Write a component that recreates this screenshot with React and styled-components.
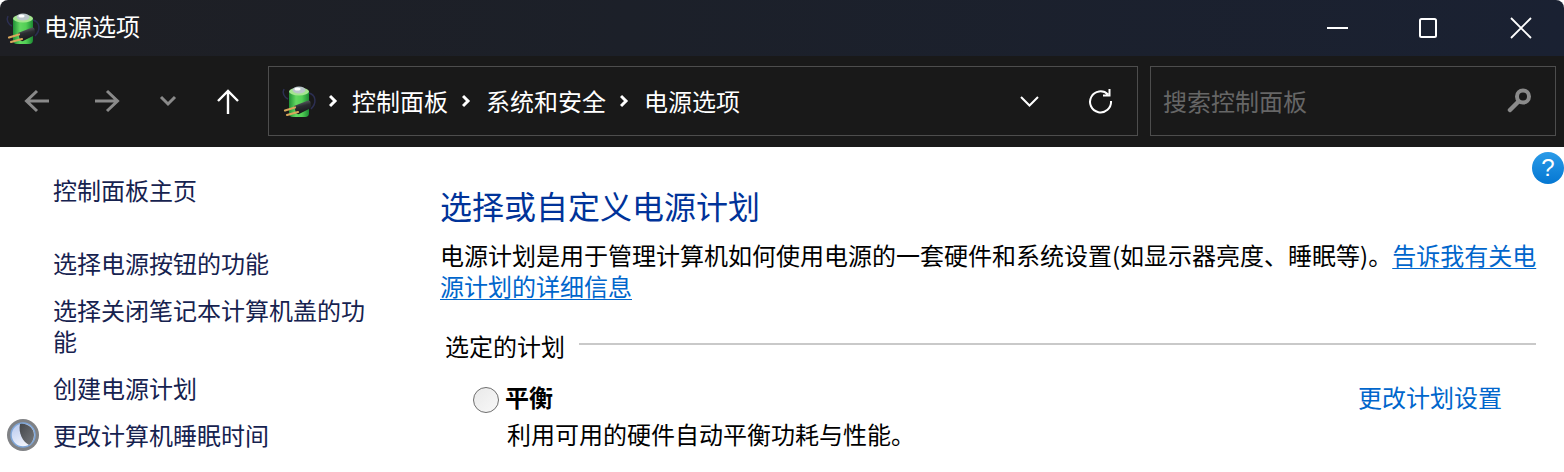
import React, { useId } from "react";
import styled, { createGlobalStyle } from "styled-components";

const FONT = `"Noto Sans CJK SC", "Noto Sans", sans-serif`;

const GlobalStyle = createGlobalStyle`
  html, body {
    margin: 0;
    background: #fff;
    overflow: hidden;
  }
  * { box-sizing: border-box; }
`;

const Page = styled.div`
  position: relative;
  width: 1564px;
  height: 472px;
  overflow: hidden;
  font-family: ${FONT};
  font-size: 24px;
  letter-spacing: 0;
`;

const TitleBar = styled.div`
  display: flex;
  align-items: center;
  height: 56px;
  padding-left: 7px;
  background: linear-gradient(90deg, #1e1f24 0%, #1c2029 40%, #1a2132 100%);
  border-radius: 8px 8px 0 0;
  color: #fff;
`;

const TitleIcon = styled.span`
  display: flex;
  margin-top: -1px;
`;

const TitleText = styled.span`
  margin-left: 5px;
  padding-bottom: 4px;
  flex: 1;
  line-height: 32px;
`;

const WindowButton = styled.div`
  display: flex;
  align-items: center;
  justify-content: center;
  width: ${(p) => p.$w}px;
  height: 56px;
`;

const Toolbar = styled.div`
  display: flex;
  align-items: center;
  height: 91px;
  padding: 0 8px 1px 0;
  background: #191919;
`;

const NavGroup = styled.div`
  display: flex;
  align-items: center;
  width: 268px;
  height: 70px;
`;

const NavButton = styled.div`
  display: flex;
  align-items: center;
  justify-content: center;
  width: ${(p) => p.$w}px;
  height: 70px;
`;

const AddressBar = styled.div`
  display: flex;
  align-items: center;
  width: 870px;
  height: 70px;
  padding-left: 14px;
  border: 1px solid #4d4d4d;
  color: #fff;
`;

const Crumb = styled.span`
  line-height: 32px;
`;

const CrumbSep = styled.span`
  display: flex;
  align-items: center;
  justify-content: center;
  width: ${(p) => p.$w}px;
`;

const AddressTools = styled.div`
  display: flex;
  align-items: center;
  margin-left: auto;
`;

const ToolButton = styled.div`
  display: flex;
  align-items: center;
  justify-content: center;
  width: ${(p) => p.$w}px;
  height: 68px;
`;

const SearchBox = styled.div`
  display: flex;
  align-items: center;
  justify-content: space-between;
  width: 406px;
  height: 70px;
  margin-left: 12px;
  padding: 0 22px 2px 12px;
  border: 1px solid #4d4d4d;
  color: #666;
`;

const Body = styled.div`
  display: flex;
  height: 325px;
  background: #fff;
`;

const Sidebar = styled.nav`
  display: flex;
  flex-direction: column;
  width: 440px;
  flex: none;
  padding-top: 27px;
`;

const SideItem = styled.a`
  display: flex;
  align-items: flex-start;
  width: 375px;
  margin-top: ${(p) => p.$top || 0}px;
  padding-left: ${(p) => (p.$icon ? 7 : 53)}px;
  color: #16224f;
  line-height: 31px;
`;

const SideIcon = styled.span`
  display: flex;
  width: 46px;
  height: 32px;
  flex: none;
`;

const Main = styled.main`
  display: flex;
  flex-direction: column;
  width: 1099px;
  flex: none;
  padding-top: 35px;
`;

const Heading = styled.h1`
  margin: 0;
  color: #003399;
  font-size: 32px;
  font-weight: 400;
  line-height: 46px;
`;

const Description = styled.p`
  margin: 11px 0 0;
  color: #000;
  line-height: 31px;
`;

const InlineLink = styled.a`
  color: #0066cc;
  text-decoration: underline;
  text-underline-offset: 3px;
  text-decoration-thickness: 1px;
`;

const SectionRow = styled.div`
  display: flex;
  align-items: center;
  margin: 29px 3px 0 0;
  padding-left: 5px;
  color: #000;
  line-height: 32px;
`;

const SectionRule = styled.div`
  flex: 1;
  height: 2px;
  margin: 0 0 4px 14px;
  background: #c9c9c9;
`;

const PlanRow = styled.div`
  display: flex;
  align-items: center;
  height: 32px;
  margin-top: 18px;
  padding-left: 33px;
`;

const Radio = styled.span`
  display: block;
  width: 26px;
  height: 26px;
  margin-top: 8px;
  border: 1.5px solid #6e6e6e;
  border-radius: 50%;
  background: linear-gradient(135deg, #e9e9e9, #f8f8f8);
`;

const PlanName = styled.span`
  margin-left: 6px;
  color: #000;
  font-weight: 700;
`;

const PlanLink = styled.a`
  margin-left: auto;
  margin-right: 37px;
  color: #0066cc;
`;

const PlanDescription = styled.div`
  margin-top: 6px;
  padding-left: 67px;
  color: #000;
  line-height: 32px;
`;

const HelpBadge = styled.div`
  position: absolute;
  top: 152px;
  left: 1532px;
  display: flex;
  align-items: center;
  justify-content: center;
  width: 32px;
  height: 32px;
  border-radius: 50%;
  background: linear-gradient(180deg, #2a9be8 0%, #0577d2 100%);
  color: #fff;
  font-family: "Liberation Sans", sans-serif;
  font-size: 24px;
`;

const BatteryIcon = () => {
  const body = useId();
  const plug = useId();
  return (
    <svg width="32" height="32" viewBox="0 0 32 32" overflow="visible">
      <defs>
        <linearGradient id={body} x1="0" x2="1" y1="0" y2="0">
          <stop offset="0" stopColor="#1f8f35" />
          <stop offset="0.35" stopColor="#63d861" />
          <stop offset="0.65" stopColor="#52cf55" />
          <stop offset="1" stopColor="#1c8a33" />
        </linearGradient>
        <linearGradient id={plug} x1="0" x2="0.300" y1="0" y2="1">
          <stop offset="0" stopColor="#7b8084" />
          <stop offset="0.500" stopColor="#2b2d31" />
          <stop offset="1" stopColor="#17181b" />
        </linearGradient>
      </defs>
      <path d="M1 4C-1 8 1 12 5 14" fill="none" stroke="#2c2f52" strokeWidth="1.500" />
      <path d="M26 8C33 10 34 18 28 24" fill="none" stroke="#2c2f52" strokeWidth="1.500" />
      <path d="M6 6H26V28Q26 32 22 32H10Q6 32 6 28Z" fill={`url(#${body})`} />
      <ellipse cx="16" cy="6.500" rx="10" ry="4" fill="#a4e58f" />
      <ellipse cx="16" cy="5" rx="6.500" ry="3.500" fill="#b9c5c9" />
      <ellipse cx="14.500" cy="4" rx="3" ry="1.500" fill="#fff" />
      <path d="M11 21L25 15.500Q27 15 27.500 17L28 21Q28 23 26 24L16 29Q14 29.500 13 28Z" fill={`url(#${plug})`} />
      <path d="M12 22.500L2 25.500M15 27L4 30" stroke="#d9a75c" strokeWidth="2.200" strokeLinecap="round" />
    </svg>
  );
};

const SleepIcon = () => {
  const face = useId();
  const moon = useId();
  return (
    <svg width="32" height="32" viewBox="0 0 32 32" overflow="visible">
      <defs>
        <linearGradient id={face} x1="0" x2="0.500" y1="0" y2="1">
          <stop offset="0" stopColor="#b4c6ee" />
          <stop offset="1" stopColor="#f2f5fc" />
        </linearGradient>
        <linearGradient id={moon} x1="0" x2="1" y1="0" y2="1">
          <stop offset="0" stopColor="#44474b" />
          <stop offset="1" stopColor="#75787c" />
        </linearGradient>
      </defs>
      <circle cx="16" cy="16" r="16" fill="#808285" />
      <circle cx="16" cy="16" r="12" fill={`url(#${face})`} stroke="#7ea6d8" strokeWidth="1.500" />
      <path d="M13 5C20 3.500 27 9 27 16C27 20 25 24 22 26C16 23 11 14 13 5Z" fill={`url(#${moon})`} />
    </svg>
  );
};

const Line = ({ d, w = 24, h = 24, color = "#fff", sw = 2 }) => (
  <svg width={w} height={h} viewBox={`0 0 ${w} ${h}`} fill="none" stroke={color} strokeWidth={sw}>
    <path d={d} />
  </svg>
);

const Chevron = () => <Line d="M1 2L6 7L1 12" w={10} h={14} sw={3} />;

const App = () => (
  <Page>
    <GlobalStyle />
    <TitleBar>
      <TitleIcon>
        <BatteryIcon />
      </TitleIcon>
      <TitleText>电源选项</TitleText>
      <WindowButton $w={82}>
        <Line d="M0 10H21" w={21} h={20} sw={2} />
      </WindowButton>
      <WindowButton $w={100}>
        <Line d="M3.500 2H16.500Q18 2 18 3.500V18.500Q18 20 16.500 20H3.500Q2 20 2 18.500V3.500Q2 2 3.500 2Z" w={20} h={22} />
      </WindowButton>
      <WindowButton $w={86}>
        <Line d="M1 1L21 21M21 1L1 21" w={22} h={22} sw={1.800} />
      </WindowButton>
    </TitleBar>

    <Toolbar>
      <NavGroup>
        <NavButton $w={74}>
          <Line d="M14 3L3.500 13L14 23M3.500 13H26" w={28} h={26} color="#8a8a8a" sw={3} />
        </NavButton>
        <NavButton $w={66}>
          <Line d="M14 3L24.500 13L14 23M24.500 13H2" w={28} h={26} color="#8a8a8a" sw={3} />
        </NavButton>
        <NavButton $w={56}>
          <Line d="M2 2L9 9L16 2" w={18} h={12} color="#8a8a8a" sw={3} />
        </NavButton>
        <NavButton $w={64}>
          <Line d="M2 13L12 3L22 13M12 3V26" h={27} color="#fff" sw={2.400} />
        </NavButton>
      </NavGroup>

      <AddressBar>
        <BatteryIcon />
        <CrumbSep $w={37}>
          <Chevron />
        </CrumbSep>
        <Crumb>控制面板</Crumb>
        <CrumbSep $w={38}>
          <Chevron />
        </CrumbSep>
        <Crumb>系统和安全</Crumb>
        <CrumbSep $w={38}>
          <Chevron />
        </CrumbSep>
        <Crumb>电源选项</Crumb>
        <AddressTools>
          <ToolButton $w={72}>
            <Line d="M2 2L10.500 10.500L19 2" w={21} h={13} sw={2} />
          </ToolButton>
          <ToolButton $w={72}>
            <Line d="M20 6.500A10.500 10.500 0 1 0 23 13M15 7.500H21.500V1" w={26} h={26} sw={2} />
          </ToolButton>
        </AddressTools>
      </AddressBar>

      <SearchBox>
        <span>搜索控制面板</span>
        <svg width="26" height="26" viewBox="0 0 26 26" fill="none" stroke="#8a8a8a">
          <circle cx="16" cy="9.500" r="6" strokeWidth="4" />
          <path d="M11.500 14.500L3 23" strokeWidth="4.500" strokeLinecap="round" />
        </svg>
      </SearchBox>
    </Toolbar>

    <Body>
      <Sidebar>
        <SideItem>控制面板主页</SideItem>
        <SideItem $top={42}>选择电源按钮的功能</SideItem>
        <SideItem $top={16}>选择关闭笔记本计算机盖的功能</SideItem>
        <SideItem $top={16}>创建电源计划</SideItem>
        <SideItem $top={16} $icon>
          <SideIcon>
            <SleepIcon />
          </SideIcon>
          更改计算机睡眠时间
        </SideItem>
      </Sidebar>

      <Main>
        <Heading>选择或自定义电源计划</Heading>
        <Description>
          电源计划是用于管理计算机如何使用电源的一套硬件和系统设置(如显示器亮度、睡眠等)。
          <InlineLink>告诉我有关电源计划的详细信息</InlineLink>
        </Description>
        <SectionRow>
          选定的计划
          <SectionRule />
        </SectionRow>
        <PlanRow>
          <Radio />
          <PlanName>平衡</PlanName>
          <PlanLink>更改计划设置</PlanLink>
        </PlanRow>
        <PlanDescription>利用可用的硬件自动平衡功耗与性能。</PlanDescription>
      </Main>
    </Body>

    <HelpBadge>?</HelpBadge>
  </Page>
);

export default App;
